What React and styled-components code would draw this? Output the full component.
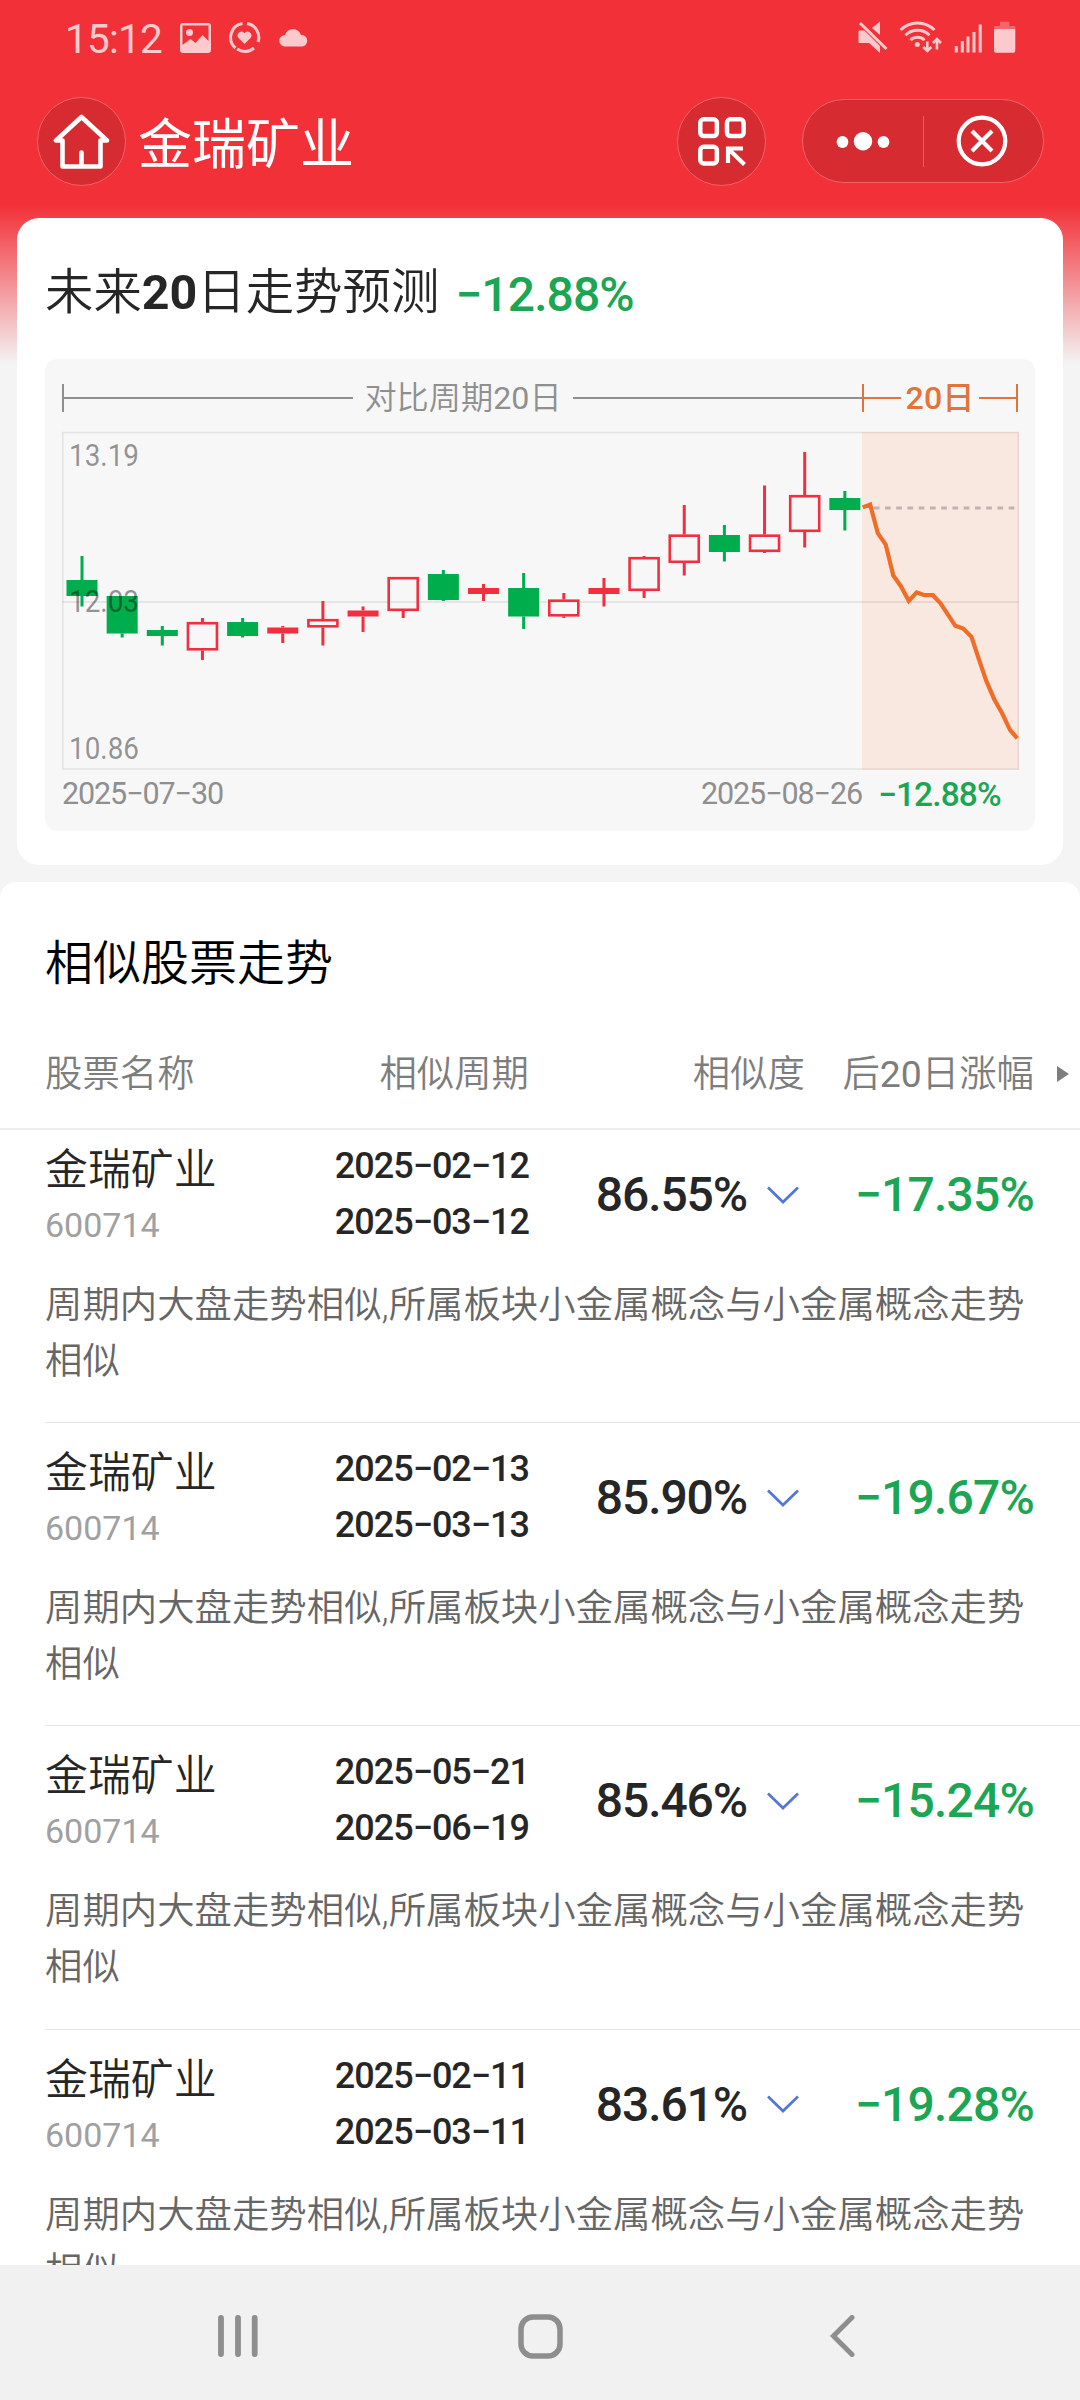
import styled, { createGlobalStyle } from 'styled-components'

const GlobalStyle = createGlobalStyle`
  * {
    box-sizing: border-box;
  }
  body {
    margin: 0;
    background: #f4f4f4;
    font-family: Roboto, 'Noto Sans CJK SC', sans-serif;
    font-weight: 350;
    color: #262626;
  }
`

const Screen = styled.div`
  width: 1080px;
  height: 2400px;
  display: flex;
  flex-direction: column;
  overflow: hidden;
  background: linear-gradient(#f23038 0, #f23038 205px, #f4f4f4 364px, #f4f4f4 100%);
`

const StatusBar = styled.div`
  height: 80px;
  flex: none;
  display: flex;
  align-items: flex-start;
  justify-content: space-between;
  padding: 15px 64px 0 65px;
  color: #fccacc;
`

const StatusGroup = styled.div`
  display: flex;
  align-items: flex-start;
`

const Clock = styled.span`
  width: 111px;
  font-size: 40.5px;
  line-height: 48px;
  font-weight: 400;
  letter-spacing: -0.8px;
`

const NavBar = styled.div`
  height: 138px;
  flex: none;
  display: flex;
  align-items: flex-start;
  padding: 17px 36px 0 37px;
`

const RoundButton = styled.div`
  width: 89px;
  height: 89px;
  border-radius: 50%;
  border: 1.5px solid #f2626a;
  background: #d62b30;
  display: flex;
  align-items: center;
  justify-content: center;
`

const PageTitle = styled.h1`
  flex: 1;
  margin: 0 0 0 12px;
  font-size: 54px;
  line-height: 97px;
  font-weight: 400;
  color: #fff;
`

const Capsule = styled.div`
  width: 242px;
  height: 84px;
  margin: 2px 0 0 36px;
  border-radius: 42px;
  border: 1.5px solid #f2626a;
  background: #d62b30;
  display: flex;
  align-items: center;
`

const CapsuleItem = styled.div`
  flex: 1;
  display: flex;
  justify-content: center;
`

const CapsuleDivider = styled.div`
  width: 1px;
  height: 51px;
  background: #ee5a61;
`

const ForecastCard = styled.section`
  height: 647px;
  flex: none;
  margin: 0 17px 17px;
  padding: 39px 28px 0;
  border-radius: 22px;
  background: #fff;
`

const ForecastTitle = styled.h2`
  margin: 0;
  height: 102px;
  display: flex;
  gap: 16px;
  font-size: 48.4px;
  line-height: 72px;
  font-weight: 350;
  b {
    font-weight: 700;
  }
`

const ForecastValue = styled.div`
  padding-top: 2px;
`

const Num = styled.span`
  font-size: ${p => p.$size}px;
  letter-spacing: ${p => p.$tight || 0}px;
  font-weight: ${p => p.$weight || 500};
  color: ${p => p.$color || '#262626'};
`

// keeps inline digits as heavy as the characters around them
const Digits = styled.span`
  font-weight: 400;
`

const ChartPanel = styled.div`
  height: 472px;
  padding: 17px 17px 0;
  border-radius: 12px;
  background: #f7f7f7;
`

const RangeRow = styled.div`
  display: grid;
  grid-template-columns: 800px 156px;
  height: 56px;
`

const Range = styled.div`
  height: 44px;
  display: flex;
  align-items: center;
  font-size: 32.2px;
  white-space: nowrap;
  color: ${p => p.$color};
`

const Tick = styled.i`
  width: 2px;
  height: 28px;
  background: currentColor;
`

const Rule = styled.i`
  flex: 1;
  height: 2px;
  background: currentColor;
`

const RangeLabel = styled.span`
  padding: 0 ${p => p.$gap}px 7px;
  font-weight: ${p => p.$weight};
`

const ChartSvg = styled.svg`
  display: block;
  width: 957px;
  height: 338px;
  overflow: visible;
`

const ChartFooter = styled.div`
  display: flex;
  height: 46px;
  align-items: center;
`

const EndDate = styled.div`
  margin-left: auto;
  width: 177px;
`

const EndChange = styled.div`
  width: 140px;
  padding-top: 2px;
`

const SimilarPanel = styled.section`
  flex: 1;
  min-height: 0;
  overflow: hidden;
  border-radius: 16px 16px 0 0;
  background: #fff;
`

const SimilarTitle = styled.h2`
  margin: 0;
  padding: 46px 45px 0;
  height: 156px;
  font-size: 48px;
  line-height: 72px;
  font-weight: 350;
  color: #000;
`

const columns = `
  display: grid;
  grid-template-columns: 242px 242px 276px 229px 1fr;
`

const TableHead = styled.div`
  ${columns}
  height: 92px;
  padding-left: 45px;
  border-bottom: 2px solid #eee;
  font-size: 37.4px;
  line-height: 72px;
  color: #7d7d7d;
`

const HeadCell = styled.div`
  text-align: ${p => p.$align || 'right'};
  white-space: nowrap;
`

const ArrowCell = styled.div`
  height: 71px;
  padding-left: 23px;
  display: flex;
  align-items: center;
`

const StockList = styled.div`
  margin: -10px 0 0 45px;
`

const StockItem = styled.div`
  height: 303.2px;
  padding-top: 11px;
  border-bottom: 1px solid #e6e6e6;
`

const StockRow = styled.div`
  ${columns}
  height: 146px;
`

const Name = styled.div`
  padding-top: 9px;
  font-size: 42.9px;
  line-height: 60px;
`

const Code = styled.div`
  font-size: 34px;
  line-height: 50px;
  font-weight: 400;
  color: #a0a0a0;
`

const Dates = styled.div`
  padding-top: 7px;
  display: flex;
  flex-direction: column;
  align-items: flex-end;
  line-height: 56px;
`

const Score = styled.div`
  height: 127px;
  padding-right: 6px;
  display: flex;
  align-items: center;
  justify-content: flex-end;
  gap: 20px;
`

const Change = styled.div`
  height: 127px;
  display: flex;
  align-items: center;
  justify-content: flex-end;
`

const Reason = styled.p`
  margin: 0;
  width: 990px;
  font-size: 37.4px;
  line-height: 56px;
  color: #666;
`

const SystemNav = styled.div`
  height: 135px;
  flex: none;
  display: flex;
  align-items: center;
  gap: 260px;
  padding: 7px 0 0 218px;
  background: #f1f1f1;
`

const GREEN = '#1ba653'
const RED = '#f02f40'
const ORANGE = '#f06d28'

// kind, then y positions: high, body top, body bottom, low
const candles = [
  ['down', 556, 580, 596, 606.5],
  ['down', 596, 596, 633.5, 637.5],
  ['down', 626, 630, 636, 645.5],
  ['up', 618, 622, 650.5, 660],
  ['down', 618, 622, 636, 637.5],
  ['flat', 626, 627.5, 633.5, 643],
  ['up', 601, 619, 627.5, 645.5],
  ['flat', 606.5, 610.5, 616.5, 632],
  ['up', 577, 577, 611, 618],
  ['down', 570, 574, 600, 601],
  ['flat', 584, 588, 594, 601],
  ['down', 573, 588, 616.5, 629],
  ['up', 593, 599.5, 616.5, 618],
  ['flat', 578, 588, 594, 606.5],
  ['up', 556, 557, 591, 598],
  ['up', 505, 534.5, 563, 575.5],
  ['down', 525, 535, 552, 561.5],
  ['up', 485.5, 534.5, 552, 553],
  ['up', 452, 495, 532, 547.5],
  ['down', 491, 498, 510, 530.5],
]

const forecast =
  '862.7,507.4 870.2,504.6 877.8,533.2 885.7,544.6 893.3,575.5 900.9,586.2 908.8,601 916.7,592.4 924.6,595.2 932.9,595.2 940.5,603.4 955.3,625.8 963.2,628.6 971.5,636.8 979,659.6 986.3,680.9 994.2,699.2 1002.1,713.3 1010,729.8 1017.3,738.4'

const REASON = '周期内大盘走势相似,所属板块小金属概念与小金属概念走势相似'

const stocks = [
  { from: '2025−02−12', to: '2025−03−12', score: '86.55%', change: '−17.35%' },
  { from: '2025−02−13', to: '2025−03−13', score: '85.90%', change: '−19.67%' },
  { from: '2025−05−21', to: '2025−06−19', score: '85.46%', change: '−15.24%' },
  { from: '2025−02−11', to: '2025−03−11', score: '83.61%', change: '−19.28%' },
]

const Candle = ({ index, data: [kind, high, top, bottom, low] }) => {
  const x = 82 + index * 40.15
  const color = kind === 'down' ? '#00ad4c' : RED
  return (
    <g>
      <path d={`M${x} ${high}V${top}M${x} ${bottom}V${low}`} stroke={color} strokeWidth="3" />
      {kind === 'up' ? (
        <rect x={x - 14.5} y={top + 1.2} width="29" height={bottom - top - 2.4} fill="none" stroke={color} strokeWidth="2.6" />
      ) : (
        <rect x={x - 15.5} y={top} width="31" height={bottom - top} fill={color} />
      )}
    </g>
  )
}

const PriceLabel = ({ y, children }) => (
  <text x="69" y={y} fontSize="30.5" fontWeight="400" textLength="70" lengthAdjust="spacingAndGlyphs" fill="#000" fillOpacity="0.42">
    {children}
  </text>
)

const Chart = () => (
  <ChartSvg viewBox="62 432 957 338">
    <rect x="862" y="432" width="157" height="338" fill="#f9e8e0" />
    <path d="M62 602H1018.5" stroke="#000" strokeOpacity="0.07" strokeWidth="2" />
    <rect x="62.75" y="432.5" width="955.5" height="336.5" fill="none" stroke="#000" strokeOpacity="0.08" strokeWidth="1.5" />
    {candles.map((c, i) => (
      <Candle key={i} index={i} data={c} />
    ))}
    <path d="M873.7 508H1015" stroke="#bfb3ac" strokeWidth="2.8" strokeDasharray="5.7 5.55" />
    <polyline points={forecast} fill="none" stroke={ORANGE} strokeWidth="4.2" />
    <PriceLabel y={466}>13.19</PriceLabel>
    <PriceLabel y={612}>12.03</PriceLabel>
    <PriceLabel y={758.5}>10.86</PriceLabel>
  </ChartSvg>
)

const LeftStatusIcons = () => (
  <svg width="136" height="40" viewBox="176 16 136 40" fill="currentColor">
    <path fillRule="evenodd" d="M183 24h25a3 3 0 0 1 3 3v24a3 3 0 0 1-3 3h-25a3 3 0 0 1-3-3V27a3 3 0 0 1 3-3zM182.500 26.500V46l8-6 5 4 7-8 6 6V26.500z" />
    <circle cx="189.500" cy="33.500" r="3.500" />
    <g fill="none" stroke="currentColor" strokeWidth="3">
      <path d="M242.500 24.600a14 14 0 0 0-7 24.400M247 24.600a14 14 0 0 1 11 18.500M237 50a14 14 0 0 0 17-1" />
    </g>
    <path d="M244.500 45l-6-6a3.700 3.700 0 0 1 6-4.800 3.700 3.700 0 0 1 6 4.800z" />
    <path d="M285 47.500a5.500 5.500 0 0 1 0-11.500 8.500 8.500 0 0 1 16 0 5.500 5.500 0 0 1 1 11.500z" />
  </svg>
)

const RightStatusIcons = () => (
  <svg width="160" height="40" viewBox="856 15 160 40" fill="currentColor">
    <path d="M859.500 30.500h5L880 46v7l-11-10h-9.500a1 1 0 0 1-1-1V31.500a1 1 0 0 1 1-1zM880 21.500V35l-8-7z" />
    <path d="M860 23l26.500 26" stroke="currentColor" strokeWidth="3" />
    <g fill="none" stroke="currentColor" strokeWidth="3">
      <path d="M900.500 30a24 24 0 0 1 34 0M905.500 35.200a17 17 0 0 1 24 0M910.500 40.200a10 10 0 0 1 14 0" />
      <path d="M927.300 41.500v9M923.300 47l4 4 4-4M937 49.500v-9M933 43l4-4 4 4" strokeWidth="2.600" />
      <path d="M956.300 46v6.500M962.300 41v11.500M968 36.500v16M974 32v20.500M980.200 24.500v28" />
    </g>
    <circle cx="917.300" cy="44.500" r="2.500" />
    <path d="M1000 21.700h9.300v4.300h6v3h-21v-3h5.700z" opacity="0.350" />
    <path d="M994 29h21.300v21.700a2 2 0 0 1-2 2H996a2 2 0 0 1-2-2z" />
  </svg>
)

const HomeIcon = () => (
  <svg width="57" height="56" viewBox="0 0 57 56" fill="none" stroke="#fff" strokeWidth="4.600" strokeLinecap="round" strokeLinejoin="round">
    <path d="M28.500 3L3 26.500h6.500v26h38v-26H54zM28.500 52V38.500" />
  </svg>
)

const ScanIcon = () => (
  <svg width="48" height="49" viewBox="0 0 48 49" fill="none" stroke="#fff" strokeWidth="4.500">
    <rect x="2.300" y="2.300" width="16.600" height="16.800" rx="3.500" />
    <rect x="29" y="2.300" width="16.600" height="16.800" rx="3.500" />
    <rect x="2.300" y="29.700" width="16.600" height="16.800" rx="3.500" />
    <path d="M45 31.500H30V46M31 32.500L46.500 47.500" strokeWidth="4.200" />
  </svg>
)

const MoreIcon = () => (
  <svg width="54" height="20" viewBox="0 0 54 20" fill="#fff">
    <circle cx="6.500" cy="11" r="5.900" />
    <circle cx="27" cy="10.300" r="9.200" />
    <circle cx="47.500" cy="11" r="5.900" />
  </svg>
)

const CloseIcon = () => (
  <svg width="54" height="52" viewBox="0 0 54 52" fill="none" stroke="#fff" strokeWidth="4.200">
    <circle cx="26" cy="26" r="23.300" />
    <path d="M16 16l20 20M36 16L16 36" />
  </svg>
)

const Chevron = () => (
  <svg width="32" height="18" viewBox="0 0 32 18" fill="none" stroke="#5277d6" strokeWidth="2.700">
    <path d="M1 1.500l15 14.500L31 1.500" />
  </svg>
)

const Stock = ({ from, to, score, change }) => (
  <StockItem>
    <StockRow>
      <div>
        <Name>金瑞矿业</Name>
        <Code>600714</Code>
      </div>
      <Dates>
        <Num $size={36} $tight={-1}>{from}</Num>
        <Num $size={36} $tight={-1}>{to}</Num>
      </Dates>
      <Score>
        <Num $size={48} $tight={-1.1}>{score}</Num>
        <Chevron />
      </Score>
      <Change>
        <Num $size={48} $tight={-0.8} $color={GREEN}>{change}</Num>
      </Change>
    </StockRow>
    <Reason>{REASON}</Reason>
  </StockItem>
)

export default () => (
  <Screen>
    <GlobalStyle />
    <StatusBar>
      <StatusGroup>
        <Clock>15:12</Clock>
        <LeftStatusIcons />
      </StatusGroup>
      <RightStatusIcons />
    </StatusBar>
    <NavBar>
      <RoundButton><HomeIcon /></RoundButton>
      <PageTitle>金瑞矿业</PageTitle>
      <RoundButton><ScanIcon /></RoundButton>
      <Capsule>
        <CapsuleItem><MoreIcon /></CapsuleItem>
        <CapsuleDivider />
        <CapsuleItem><CloseIcon /></CapsuleItem>
      </Capsule>
    </NavBar>
    <ForecastCard>
      <ForecastTitle>
        <span>未来<b>20</b>日走势预测</span>
        <ForecastValue>
          <Num $size={48} $tight={-0.9} $color={GREEN}>−12.88%</Num>
        </ForecastValue>
      </ForecastTitle>
      <ChartPanel>
        <RangeRow>
          <Range $color="#8f8f8f">
            <Tick />
            <Rule />
            <RangeLabel $gap={11} $weight={350}>对比周期<Digits>20</Digits>日</RangeLabel>
            <Rule />
          </Range>
          <Range $color="#e0743a">
            <Tick />
            <Rule />
            <RangeLabel $gap={5} $weight={500}>20日</RangeLabel>
            <Rule />
            <Tick />
          </Range>
        </RangeRow>
        <Chart />
        <ChartFooter>
          <Num $size={30.5} $tight={-1.1} $weight={400} $color="#8f8f8f">2025−07−30</Num>
          <EndDate>
            <Num $size={30.5} $tight={-1.1} $weight={400} $color="#8f8f8f">2025−08−26</Num>
          </EndDate>
          <EndChange>
            <Num $size={33.5} $tight={-0.9} $color={GREEN}>−12.88%</Num>
          </EndChange>
        </ChartFooter>
      </ChartPanel>
    </ForecastCard>
    <SimilarPanel>
      <SimilarTitle>相似股票走势</SimilarTitle>
      <TableHead>
        <HeadCell $align="left">股票名称</HeadCell>
        <HeadCell>相似周期</HeadCell>
        <HeadCell>相似度</HeadCell>
        <HeadCell>后<Digits>20</Digits>日涨幅</HeadCell>
        <ArrowCell>
          <svg width="12" height="16" viewBox="0 0 12 16" fill="#7d7d7d">
            <path d="M0 0l12 8-12 8z" />
          </svg>
        </ArrowCell>
      </TableHead>
      <StockList>
        {stocks.map(s => (
          <Stock key={s.from} {...s} />
        ))}
      </StockList>
    </SimilarPanel>
    <SystemNav>
      <svg width="40" height="42" viewBox="0 0 40 42" stroke="#8e8e8e" strokeWidth="5.800" strokeLinecap="round">
        <path d="M3 3v36M20 3v36M36.700 3v36" />
      </svg>
      <svg width="45" height="45" viewBox="0 0 45 45" fill="none" stroke="#8e8e8e" strokeWidth="5.500">
        <rect x="3" y="3" width="39" height="39" rx="12" />
      </svg>
      <svg width="34" height="42" viewBox="-7 0 34 42" fill="none" stroke="#8e8e8e" strokeWidth="5" strokeLinecap="round">
        <path d="M22 2.500L3.500 21 22 39.500" />
      </svg>
    </SystemNav>
  </Screen>
)
